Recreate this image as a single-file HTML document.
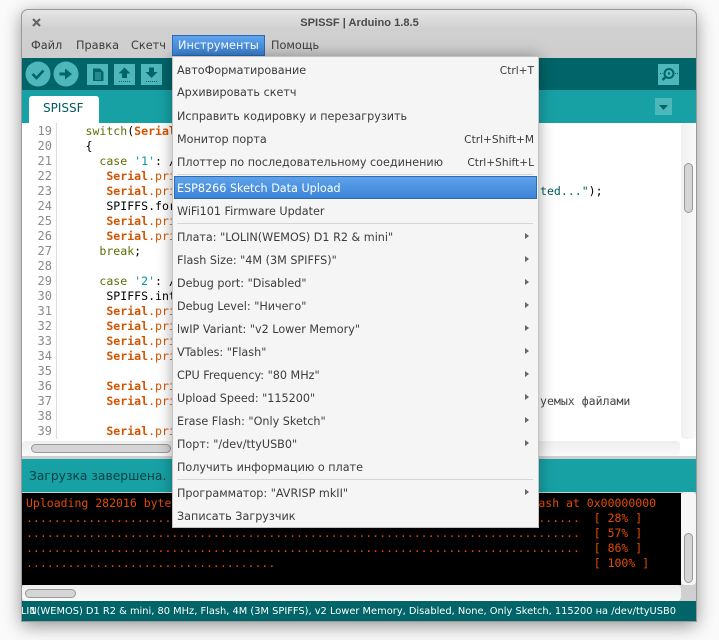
<!DOCTYPE html>
<html><head><meta charset="utf-8">
<style>
html,body{margin:0;padding:0;width:719px;height:640px;overflow:hidden;background:#fafafa}
*{box-sizing:border-box}
div,span{white-space:pre}
.a{position:absolute}
#win{position:absolute;left:22px;top:10px;width:674px;height:611px;background:#d0d0d0;border-radius:6px 6px 0 0;box-shadow:0 4px 18px rgba(0,0,0,.45)}
#frame{position:absolute;left:21px;top:9px;width:676px;height:613px;border:1px solid #999;border-radius:7px 7px 0 0;z-index:20;pointer-events:none}
.ui{font-family:"DejaVu Sans",sans-serif;font-size:11.2px;color:#3c3c3c}
.mb{position:absolute;top:38px;line-height:16px;font-size:11.3px}
.ln{position:absolute;left:22px;width:30px;text-align:right;font:12px/15px "DejaVu Sans Mono",monospace;color:#8a8a8a}
.cd{position:absolute;font:11.55px/15px "DejaVu Sans Mono",monospace;color:#000}
.k{color:#5e6d03}.s{color:#d35400;font-weight:bold}.f{color:#d35400}.t{color:#005c5f}
.con{position:absolute;left:26px;font:11.5px/15px "DejaVu Sans Mono",monospace;color:#e34c00}
.it{position:absolute;left:177px;line-height:16px}
.sc{position:absolute;right:185px;line-height:16px;text-align:right;font-size:10.6px}
.ar{position:absolute;left:525px;width:0;height:0;border-left:4px solid #666;border-top:3.5px solid transparent;border-bottom:3.5px solid transparent}
.sep{position:absolute;left:177px;width:356px;height:1px;background:#d5d5d5}
</style></head><body>
<div id="win"></div>
<div class="a" style="left:22px;top:10px;width:674px;height:48px;background:linear-gradient(#e6e6e6,#d0d0d0 40%,#cecece);border-radius:6px 6px 0 0"></div>
<svg class="a" style="left:31px;top:17px" width="11" height="11"><path d="M2 2L9 9M9 2L2 9" stroke="#666" stroke-width="2.2"/></svg>
<div class="a" style="left:22px;width:675px;top:15px;text-align:center;font:bold 11.1px/16px 'Liberation Sans',sans-serif;color:#4a4a4a">SPISSF | Arduino 1.8.5</div>
<div class="mb ui" style="left:31px">Файл</div>
<div class="mb ui" style="left:76px">Правка</div>
<div class="mb ui" style="left:131px">Скетч</div>
<div class="a" style="left:172px;top:35px;width:93px;height:21px;background:linear-gradient(#5fa2ea,#3c84d8);border:1px solid #2a6cb5"></div>
<div class="mb ui" style="left:178px;color:#fff">Инструменты</div>
<div class="mb ui" style="left:271px">Помощь</div>

<div class="a" style="left:22px;top:58px;width:674px;height:32px;background:#006468"></div>
<svg class="a" style="left:22px;top:58px" width="150" height="32">
<circle cx="16" cy="16" r="12.5" fill="#4db7bb"/><path d="M10.5 16L14.5 20L21.5 12.5" fill="none" stroke="#006468" stroke-width="2.6"/>
<circle cx="44" cy="16" r="12.5" fill="#4db7bb"/><path d="M37.5 14.5H43V10.5L50 16L43 21.5V17.5H37.5Z" fill="#006468"/>
<rect x="65" y="6" width="21" height="21" fill="#4db7bb"/><path d="M71 10.5H78L81.5 14V23H71Z" fill="#006468"/><path d="M73 15H79M73 17H79M73 19H79M73 21H79M74 14V22M76 14V22M78 14V22" stroke="#4db7bb" stroke-width=".6"/>
<rect x="92" y="6" width="21" height="21" fill="#4db7bb"/><path d="M102.500 9.500L108.500 15.500H105V20H100V15.500H96.500Z" fill="#006468"/><path d="M97 23.500H108" stroke="#006468" stroke-dasharray="1 1"/>
<rect x="119" y="6" width="21" height="21" fill="#4db7bb"/><path d="M129.500 20L123.500 14H127V9.500H132V14H135.500Z" fill="#006468"/><path d="M124 23.500H135" stroke="#006468" stroke-dasharray="1 1"/>
</svg>
<svg class="a" style="left:658px;top:64px" width="21" height="21"><rect width="21" height="21" fill="#4db7bb"/><circle cx="11" cy="9.500" r="4.500" fill="none" stroke="#006468" stroke-width="2"/><circle cx="11" cy="9.500" r="1.200" fill="#006468"/><path d="M7.500 13L4.500 16" stroke="#006468" stroke-width="2.500"/><path d="M2 9.500H4.500M17 9.500H20" stroke="#006468" stroke-dasharray="1 1"/></svg>

<div class="a" style="left:22px;top:90px;width:674px;height:33px;background:#17a1a5"></div>
<div class="a" style="left:29px;top:96px;width:70px;height:27px;background:#fff;border-radius:3px 3px 0 0"></div>
<div class="a ui" style="left:43px;top:100px;line-height:16px;color:#005c5f;font-size:12px">SPISSF</div>
<svg class="a" style="left:655px;top:98px" width="17" height="17"><rect width="17" height="17" fill="#4db7bb"/><path d="M4 7H13L8.500 12Z" fill="#006468"/></svg>

<div class="a" style="left:22px;top:123px;width:674px;height:333px;background:#fff"></div>
<div class="a" style="left:56px;top:123px;width:1px;height:316px;background:#ddd"></div>
<div class="ln" style="top:124px">19
20
21
22
23
24
25
26
27
28
29
30
31
32
33
34
35
36
37
38
39</div>
<div class="cd" style="left:85.500px;top:124px;width:500px;overflow:hidden;height:316px"><span class="k">switch</span>(<span class="s">Serial</span>
{
  <span class="k">case</span> <span style="color:#00979c">'1'</span>: /
   <span class="s">Serial</span><span class="f">.pri</span>
   <span class="s">Serial</span><span class="f">.pri</span>
   SPIFFS.for
   <span class="s">Serial</span><span class="f">.pri</span>
   <span class="s">Serial</span><span class="f">.pri</span>
  <span class="k">break</span>;

  <span class="k">case</span> <span style="color:#00979c">'2'</span>: /
   SPIFFS.int
   <span class="s">Serial</span><span class="f">.pri</span>
   <span class="s">Serial</span><span class="f">.pri</span>
   <span class="s">Serial</span><span class="f">.pri</span>
   <span class="s">Serial</span><span class="f">.pri</span>

   <span class="s">Serial</span><span class="f">.pri</span>
   <span class="s">Serial</span><span class="f">.pri</span>

   <span class="s">Serial</span><span class="f">.pri</span></div>
<div class="cd t" style="left:540px;top:184px"><span class="t">ted..."</span><span style="color:#000">);</span></div>
<div class="cd" style="left:540px;top:394px;color:#444">уемых файлами</div>

<div class="a" style="left:681px;top:123px;width:15px;height:316px;background:linear-gradient(90deg,#f0f0f0,#fafafa);border-radius:4px"></div>
<div class="a" style="left:684px;top:163px;width:9px;height:50px;background:#d5d5d5;border:1px solid #999;border-radius:5px"></div>
<div class="a" style="left:22px;top:441px;width:658px;height:15px;background:linear-gradient(#eee,#fafafa);border-radius:4px"></div>
<div class="a" style="left:31px;top:444px;width:140px;height:9px;background:#d5d5d5;border:1px solid #999;border-radius:5px"></div>
<div class="a" style="left:22px;top:456px;width:674px;height:3px;background:#cfcfcf"></div>

<div class="a" style="left:22px;top:459px;width:674px;height:33px;background:#17a1a5"></div>
<div class="a ui" style="left:29px;top:468px;line-height:16px;color:#003f42;font-size:12.300px">Загрузка завершена.</div>

<div class="a" style="left:22px;top:492px;width:659px;height:93px;background:#000;border-top:1px solid #ccc"></div>
<div class="con" style="top:496px">Uploading 282016 bytes from /tmp/arduino_build_000000/SPISSF.ino.bin to flash at 0x00000000</div>
<div class="con" style="top:511px">................................................................................  [ 28% ]</div>
<div class="con" style="top:526px">................................................................................  [ 57% ]</div>
<div class="con" style="top:541px">................................................................................  [ 86% ]</div>
<div class="con" style="top:556px">....................................                                              [ 100% ]</div>
<div class="a" style="left:681px;top:492px;width:15px;height:93px;background:#f6f6f6;border-radius:4px"></div>
<div class="a" style="left:684px;top:533px;width:9px;height:50px;background:#d5d5d5;border:1px solid #999;border-radius:5px"></div>
<div class="a" style="left:22px;top:585px;width:659px;height:16px;background:linear-gradient(#eee,#fafafa);border-radius:4px"></div>
<div class="a" style="left:25px;top:589px;width:51px;height:9px;background:#d5d5d5;border:1px solid #999;border-radius:5px"></div>

<div class="a" style="left:22px;top:601px;width:674px;height:20px;background:#006468;overflow:hidden">
<div class="a ui" style="right:20px;top:3px;line-height:16px;color:#fff;font-size:9.860px">LOLIN(WEMOS) D1 R2 &amp; mini, 80 MHz, Flash, 4M (3M SPIFFS), v2 Lower Memory, Disabled, None, Only Sketch, 115200 на /dev/ttyUSB0</div>
<div class="a ui" style="left:8px;top:3px;line-height:16px;color:#fff;font-size:10px">1</div>
</div>

<div class="a" style="left:172px;top:56px;width:367px;height:472px;background:#f5f5f5;border:1px solid #c4c4c4;box-shadow:0 0 14px rgba(0,0,0,.35)"></div>
<div class="ui">
<div class="it" style="top:63px">АвтоФорматирование</div><div class="sc" style="top:63px">Ctrl+T</div>
<div class="it" style="top:85px">Архивировать скетч</div>
<div class="it" style="top:109px">Исправить кодировку и перезагрузить</div>
<div class="it" style="top:132px">Монитор порта</div><div class="sc" style="top:132px">Ctrl+Shift+M</div>
<div class="it" style="top:155px">Плоттер по последовательному соединению</div><div class="sc" style="top:155px">Ctrl+Shift+L</div>
<div class="sep" style="top:174px"></div>
<div class="a" style="left:174px;top:176px;width:363px;height:23px;background:linear-gradient(#5fa2ea,#3c84d8);border:1px solid #2a6cb5"></div>
<div class="it" style="top:181px;color:#fff">ESP8266 Sketch Data Upload</div>
<div class="it" style="top:204px">WiFi101 Firmware Updater</div>
<div class="sep" style="top:223px"></div>
<div class="it" style="top:230px">Плата: "LOLIN(WEMOS) D1 R2 &amp; mini"</div><div class="ar" style="top:233px"></div>
<div class="it" style="top:253px">Flash Size: "4M (3M SPIFFS)"</div><div class="ar" style="top:256px"></div>
<div class="it" style="top:276px">Debug port: "Disabled"</div><div class="ar" style="top:279px"></div>
<div class="it" style="top:299px">Debug Level: "Ничего"</div><div class="ar" style="top:302px"></div>
<div class="it" style="top:322px">lwIP Variant: "v2 Lower Memory"</div><div class="ar" style="top:325px"></div>
<div class="it" style="top:345px">VTables: "Flash"</div><div class="ar" style="top:348px"></div>
<div class="it" style="top:368px">CPU Frequency: "80 MHz"</div><div class="ar" style="top:371px"></div>
<div class="it" style="top:391px">Upload Speed: "115200"</div><div class="ar" style="top:394px"></div>
<div class="it" style="top:414px">Erase Flash: "Only Sketch"</div><div class="ar" style="top:417px"></div>
<div class="it" style="top:437px">Порт: "/dev/ttyUSB0"</div><div class="ar" style="top:440px"></div>
<div class="it" style="top:460px">Получить информацию о плате</div>
<div class="sep" style="top:479px"></div>
<div class="it" style="top:486px">Программатор: "AVRISP mkII"</div><div class="ar" style="top:489px"></div>
<div class="it" style="top:509px">Записать Загрузчик</div>
</div>
<div id="frame"></div>
</body></html>
